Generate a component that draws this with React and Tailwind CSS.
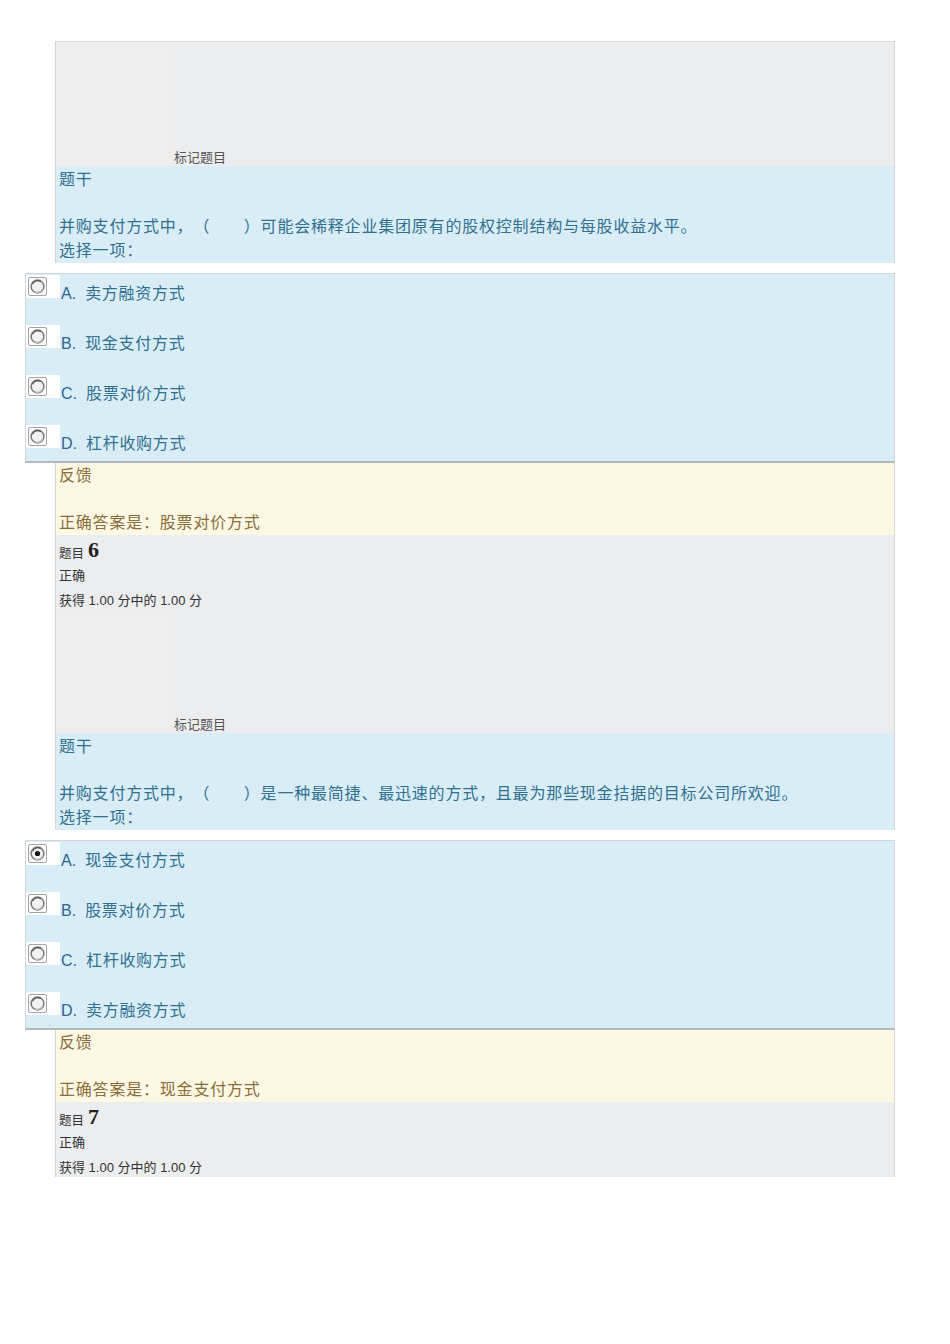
import React from "react";

const font = { fontFamily: '"Liberation Sans", "Noto Sans CJK SC", sans-serif' };

const Radio = ({ checked }) => (
  <svg width="19" height="19" viewBox="0 0 19 19">
    <rect x="0.5" y="0.5" width="18" height="18" rx="1.5" fill="#fdfdfd" stroke="#a3a3a3" />
    <circle cx="9.5" cy="9.5" r="6.4" fill="#f2f2f2" stroke="#7d7d7d" strokeWidth="1.6" />
    <path d="M4.6 7.2 A5.6 5.6 0 0 1 12.8 4.6" fill="none" stroke="#555" strokeWidth="1.2" />
    <path d="M14.6 11.4 A5.6 5.6 0 0 1 7 14.8" fill="none" stroke="#c8c8c8" strokeWidth="1.2" />
    {checked && <circle cx="9.5" cy="9.5" r="2.6" fill="#111" />}
  </svg>
);

const MarkHead = ({ height, top }) => (
  <div
    className={`flex bg-[#ebedef] border-x border-[#d6d6d6] ${top ? "border-t" : ""} ${height}`}
  >
    <div className="w-[117px] h-full bg-[#eeeeee]" />
    <div className="self-end text-[13px] leading-[17px] text-[#555] pl-[1px]">标记题目</div>
  </div>
);

const Stem = ({ text }) => (
  <div className="bg-[#d9edf7] border-x border-[#d6d6d6] h-[97px] pl-[3px] pt-[2px] text-[#31708f] text-[16px] tracking-[0.8px] leading-[24px]">
    <div>题干</div>
    <div className="mt-[23px]">{text}</div>
    <div>选择一项：</div>
  </div>
);

const Options = ({ items, checked }) => (
  <div className="mt-[10px] -ml-[30px] w-[870px] bg-[#d9edf7] border-t border-t-[#cfd6da] border-l border-l-[#d0d6da] border-r border-r-[#d6d6d6] border-b-2 border-b-[#b5b9bc] pt-[1px] pb-[6px] flex flex-col gap-[20px]">
    {items.map((t, i) => (
      <div key={i} className="flex items-start h-[30px]">
        <div className="w-[34px] h-[23px] bg-white pl-[2px] pt-[2px]">
          <Radio checked={checked === i} />
        </div>
        <div className="mt-[7px] ml-[1px] leading-[24px] text-[16px] text-[#2f6590]">
          <span>{"ABCD"[i]}.</span>
          <span className="ml-[9px] tracking-[0.7px] text-[#31708f]">{t}</span>
        </div>
      </div>
    ))}
  </div>
);

const Feedback = ({ answer }) => (
  <div className="bg-[#fcf8e3] border-x border-[#d6d6d6] h-[72px] pl-[3px] pt-[1px] text-[#8a6d3b] text-[16px] tracking-[0.8px] leading-[24px]">
    <div>反馈</div>
    <div className="mt-[23px]">正确答案是：{answer}</div>
  </div>
);

const Info = ({ num }) => (
  <div className="bg-[#ebedef] border-x border-[#d6d6d6] pl-[3px] pt-[3px] text-[13px] text-[#333]">
    <div className="h-[25px] flex items-end">
      <span className="text-[12.5px] leading-[18px]">题目</span>
      <span
        className="ml-[4px] text-[22px] font-bold leading-[26px] text-[#222]"
        style={{ fontFamily: '"Liberation Serif", "DejaVu Serif", serif' }}
      >
        {num}
      </span>
    </div>
    <div className="h-[25px] leading-[25px]">正确</div>
    <div className="h-[25px] leading-[25px]">获得 1.00 分中的 1.00 分</div>
  </div>
);

export default function App() {
  return (
    <div className="w-[950px] min-h-[1344px] bg-white pt-[41px] [text-spacing-trim:space-all]" style={font}>
      <div className="ml-[55px] w-[840px] flex flex-col">
        <MarkHead height="h-[125px]" top />
        <Stem text="并购支付方式中，（　　）可能会稀释企业集团原有的股权控制结构与每股收益水平。" />
        <Options items={["卖方融资方式", "现金支付方式", "股票对价方式", "杠杆收购方式"]} />
        <Feedback answer="股票对价方式" />
        <Info num="6" />
        <MarkHead height="h-[120px]" />
        <Stem text="并购支付方式中，（　　）是一种最简捷、最迅速的方式，且最为那些现金拮据的目标公司所欢迎。" />
        <Options items={["现金支付方式", "股票对价方式", "杠杆收购方式", "卖方融资方式"]} checked={0} />
        <Feedback answer="现金支付方式" />
        <div className="h-[75px] overflow-hidden">
          <Info num="7" />
        </div>
      </div>
    </div>
  );
}
